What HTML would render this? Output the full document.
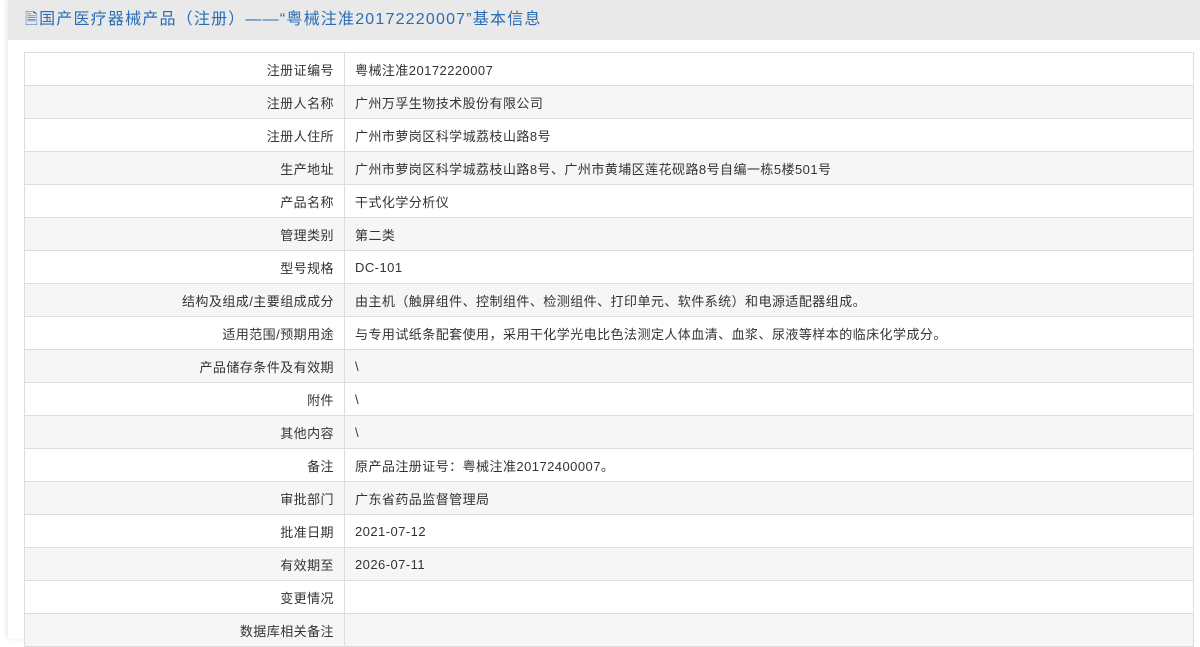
<!DOCTYPE html>
<html><head><meta charset="utf-8"><style>
body{margin:0;width:1200px;height:639px;overflow:hidden;background:#fff;font-family:"Liberation Sans","Noto Sans CJK SC",sans-serif;}
.wrap{position:absolute;left:8px;top:0;width:1192px;height:639px;background:#fff;box-shadow:-2px 0 4px rgba(0,0,0,.08);}
.hd{height:40px;background:#e9e9e9;color:#2a6db5;font-size:16px;line-height:40px;padding-left:17px;letter-spacing:1.2px;}
table{position:absolute;left:16px;top:52px;width:1170px;border-collapse:collapse;font-size:13px;color:#333;letter-spacing:0.45px;}
td{height:32px;border:1px solid #ddd;padding:0 10px;}
td.l{width:299px;text-align:right;}
tr:nth-child(even) td{background:#f6f6f6;}
</style></head><body><div class="wrap">
<div class="hd">🗎国产医疗器械产品（注册）——“粤械注准20172220007”基本信息</div>
<table>
<tr><td class="l">注册证编号</td><td>粤械注准20172220007</td></tr>
<tr><td class="l">注册人名称</td><td>广州万孚生物技术股份有限公司</td></tr>
<tr><td class="l">注册人住所</td><td>广州市萝岗区科学城荔枝山路8号</td></tr>
<tr><td class="l">生产地址</td><td>广州市萝岗区科学城荔枝山路8号、广州市黄埔区莲花砚路8号自编一栋5楼501号</td></tr>
<tr><td class="l">产品名称</td><td>干式化学分析仪</td></tr>
<tr><td class="l">管理类别</td><td>第二类</td></tr>
<tr><td class="l">型号规格</td><td>DC-101</td></tr>
<tr><td class="l">结构及组成/主要组成成分</td><td>由主机（触屏组件、控制组件、检测组件、打印单元、软件系统）和电源适配器组成。</td></tr>
<tr><td class="l">适用范围/预期用途</td><td>与专用试纸条配套使用，采用干化学光电比色法测定人体血清、血浆、尿液等样本的临床化学成分。</td></tr>
<tr><td class="l">产品储存条件及有效期</td><td>\</td></tr>
<tr><td class="l">附件</td><td>\</td></tr>
<tr><td class="l">其他内容</td><td>\</td></tr>
<tr><td class="l">备注</td><td>原产品注册证号：粤械注准20172400007。</td></tr>
<tr><td class="l">审批部门</td><td>广东省药品监督管理局</td></tr>
<tr><td class="l">批准日期</td><td>2021-07-12</td></tr>
<tr><td class="l">有效期至</td><td>2026-07-11</td></tr>
<tr><td class="l">变更情况</td><td></td></tr>
<tr><td class="l">数据库相关备注</td><td></td></tr>
</table></div></body></html>
